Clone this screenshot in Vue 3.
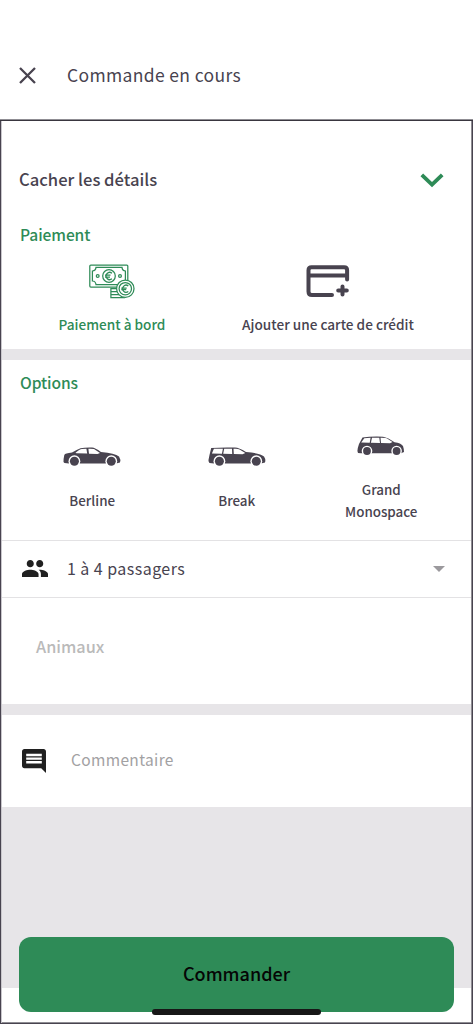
<template>
  <div class="screen">
    <header class="header">
      <button class="icon-btn" aria-label="Fermer">
        <svg width="17" height="17" viewBox="0 0 17 17">
          <path d="M1 1 16 16M16 1 1 16" fill="none" stroke="currentColor" stroke-width="2.3" />
        </svg>
      </button>
      <h1 class="title"><span>Commande en cours</span></h1>
    </header>

    <main class="panel">
      <section class="payment">
        <div class="details" @click="open = !open">
          <span class="details-label">Cacher les détails</span>
          <svg class="chevron" width="24" height="15" viewBox="0 0 24 15">
            <path d="M1.8 1.8 12 11.6 22.2 1.8" fill="none" stroke="currentColor" stroke-width="3.8" />
          </svg>
        </div>
        <h2 class="section-title">Paiement</h2>
        <div class="methods">
          <div class="method active">
            <svg width="46" height="35" viewBox="0 0 46 35" fill="none" stroke="currentColor" stroke-width="1.25">
              <rect x="0.8" y="1" width="38" height="22" rx="1" />
              <path d="M7 3.4H33Q33.3 6.8 36.4 7V17Q33.3 17.2 33 20.6H7Q6.7 17.2 3.4 17V7Q6.7 6.8 7 3.4Z" />
              <circle cx="20" cy="12" r="6.3" />
              <circle cx="8.7" cy="12" r="1.4" />
              <circle cx="31" cy="12" r="1.4" />
              <path d="M23 9.2A3.6 3.6 0 1 0 23 14.8M16 11.2H21.5M16 13H21" />
              <path d="M30 24.5H21.9V33.5H36M21.9 27.5H29M21.9 30.5H30" />
              <circle cx="36.3" cy="24.7" r="8.7" fill="#fff" />
              <circle cx="36.3" cy="24.7" r="6.2" />
              <path d="M39.3 22A3.5 3.5 0 1 0 39.3 27.4M32.3 24H37.7M32.3 25.6H37.2" />
            </svg>
            <span>Paiement à bord</span>
          </div>
          <div class="method">
            <svg width="44" height="35" viewBox="0 0 44 35" fill="none" stroke="currentColor" stroke-width="4" stroke-linecap="round" stroke-linejoin="round">
              <path d="M26 31H6Q2.5 31 2.5 27.5V6.2Q2.5 3.2 5.5 3.2H38.1Q41.1 3.2 41.1 6.2V15.4M2.5 11.6H41.1" />
              <path d="M36.5 22.4V30.6M32.2 26.5H40.800" />
            </svg>
            <span>Ajouter une carte de crédit</span>
          </div>
        </div>
      </section>

      <div class="band"></div>

      <section class="options">
        <h2 class="section-title options-title">Options</h2>
        <div class="cars">
          <div v-for="car in cars" :key="car.id" class="car" :class="car.id">
            <svg :width="car.width" height="20" :viewBox="`0 0 ${car.width} 20`">
              <path :d="car.body" fill="currentColor" />
              <path :d="car.windows" fill="#fff" />
              <g v-for="x in car.wheels" :key="x">
                <circle :cx="x" :cy="car.wheelY" :r="car.wheelR + 1.4" fill="#fff" />
                <circle :cx="x" :cy="car.wheelY" :r="car.wheelR" fill="currentColor" />
              </g>
            </svg>
            <span class="car-label">{{ car.label }}</span>
          </div>
        </div>
      </section>

      <div class="passengers">
        <svg width="26" height="17" viewBox="1 5 22 14" preserveAspectRatio="none">
          <path fill="#202020" d="M16 11c1.66 0 2.99-1.34 2.99-3S17.66 5 16 5c-1.66 0-3 1.34-3 3s1.34 3 3 3zm-8 0c1.66 0 2.99-1.34 2.99-3S9.66 5 8 5C6.34 5 5 6.34 5 8s1.34 3 3 3zm0 2c-2.33 0-7 1.17-7 3.5V19h14v-2.5c0-2.33-4.67-3.5-7-3.5zm8 0c-.29 0-.62.02-.97.05 1.16.84 1.97 1.97 1.97 3.45V19h6v-2.5c0-2.33-4.67-3.5-7-3.5z" />
        </svg>
        <span class="passengers-label">1 à 4 passagers</span>
        <span class="caret"></span>
      </div>

      <div class="animals"><span>Animaux</span></div>

      <div class="band"></div>

      <div class="comment">
        <svg width="24" height="24" viewBox="2 2 20 20">
          <path fill="#202020" d="M21.99 4c0-1.1-.89-2-1.99-2H4c-1.1 0-2 .9-2 2v12c0 1.1.9 2 2 2h14l4 4-.01-18z" />
          <path stroke="#fff" stroke-width="2" d="M5.5 7H18.5M5.5 10H18.5M5.5 13H18.5" />
        </svg>
        <span class="comment-label">Commentaire</span>
      </div>

      <footer class="footer">
        <button class="submit"><span>Commander</span></button>
        <div class="home-bar"></div>
      </footer>
    </main>
  </div>
</template>

<script setup>
import { ref } from 'vue'

const open = ref(true)

const cars = [
  {
    id: 'berline',
    label: 'Berline',
    width: 58,
    wheels: [11.4, 48.3],
    wheelY: 14.2,
    wheelR: 4.5,
    body: 'M1.5 16Q0 15 .6 12L1.3 8Q2 6.2 9 5.6Q14 2.6 17.5 1.3Q22 .4 29 .6Q32 .8 38 5Q52 6 56 9.5Q58 12.5 57 15.5L53 16.6H6Z',
    windows: 'M12.5 5.7Q16.5 2.2 19 2Q21 1.7 23.4 1.7L24.2 6.6L13.5 6.2ZM25.4 1.7Q30 1.6 31 2.1L37 6L34.5 7L26 6.7Z',
  },
  {
    id: 'break',
    label: 'Break',
    width: 58,
    wheels: [11.4, 48.3],
    wheelY: 14.2,
    wheelR: 4.5,
    body: 'M1.5 16Q0 14.5 .7 12L1.5 8L3.2 .9Q16 .2 27 .6Q31 .8 38 5Q52 6 56 9.5Q58 12.5 57 15.5L53 16.6H6Z',
    windows: 'M3.9 6.4L5.9 1.8H14.9L13.9 6.7ZM16.2 1.8H24L24.2 7L15.2 6.8ZM25.5 1.8Q30 1.5 31.5 2.4L37.3 6L34.5 7.2L25.8 7Z',
  },
  {
    id: 'monospace',
    label: 'Grand Monospace',
    width: 48,
    wheels: [10, 39.6],
    wheelY: 15,
    wheelR: 3.9,
    body: 'M1 17Q0 15 .8 12L2 8L5.5 1.6Q14 .2 26 .7Q31 1.5 37.5 6.2Q44 7 46 10Q47 13 47 16L44 17.2H4Z',
    windows: 'M4.2 6.5L7.3 2.2L13.6 1.8L12.7 6.7ZM15 1.7L22.3 1.7L23 6.9L13.9 6.8ZM23.5 1.7Q29 1.6 30.5 2.8L35.5 6L33 7.2L24 7Z',
  },
]
</script>

<style>
body {
  margin: 0;
  background: #fff;
}
</style>

<style scoped>
.screen {
  display: flex;
  flex-direction: column;
  height: 1024px;
  box-sizing: border-box;
  overflow: hidden;
  color: #48434f;
  font-family: "Noto Sans CJK SC", "Noto Sans", sans-serif;
  font-weight: 500;
}
h1,
h2 {
  margin: 0;
}
button {
  border: 0;
  font-family: inherit;
  padding: 0;
}
svg {
  display: block;
  flex: none;
}
span {
  white-space: nowrap;
}
.header {
  height: 121px;
  box-sizing: border-box;
  display: flex;
  align-items: flex-start;
  padding: 59px 0 0 19px;
  border-bottom: 1px solid #39363f;
  box-shadow: inset 0 -1px #8f8d93;
}
.icon-btn {
  background: none;
  color: inherit;
  height: 33px;
}
.title {
  margin-left: 31px;
  font-size: 17.5px;
  line-height: 31px;
  font-weight: 400;
  letter-spacing: 0.35px;
}
.panel {
  flex: 1;
  display: flex;
  flex-direction: column;
  box-sizing: border-box;
  border: solid #48434f;
  border-width: 0 1px 1px;
  box-shadow: inset 1px 0 #c9c7cc, inset -1px -1px #8f8d93;
  padding: 0 1px 1px;
}
.payment {
  height: 228px;
}
.details {
  display: flex;
  align-items: center;
  justify-content: space-between;
  height: 30px;
  padding: 43px 27px 0 17px;
}
.details-label {
  font-size: 16.6px;
}
.chevron {
  margin-top: 2px;
  color: #2e8b57;
}
.section-title {
  margin: 25px 0 0 18px;
  color: #2e8b57;
  font-size: 15.6px;
  line-height: 30px;
  font-weight: 500;
  letter-spacing: -0.1px;
}
.methods {
  display: flex;
  padding: 15px 36px 0 3px;
}
.method {
  width: 215px;
  display: flex;
  flex-direction: column;
  align-items: center;
  gap: 13px;
  line-height: 24px;
  font-size: 13.6px;
}
.method + .method {
  padding-left: 2px;
}
.active {
  color: #2e8b57;
}
.band {
  height: 11px;
  background: #e7e5e8;
}
.options {
  height: 180px;
}
.options-title {
  margin-top: 0;
  padding-top: 7px;
}
.cars {
  display: grid;
  grid-template-columns: repeat(3, 144.5px);
  padding: 50px 0 0 18px;
}
.car {
  display: flex;
  flex-direction: column;
  align-items: center;
  gap: 22px;
}
.monospace {
  margin-top: -11px;
}
.car-label {
  max-width: 90px;
  white-space: normal;
  text-align: center;
  font-size: 13.4px;
  line-height: 22px;
}
.passengers {
  display: flex;
  align-items: center;
  box-sizing: border-box;
  height: 58px;
  padding: 0 26px 1px 20px;
  border: 1px solid #e3e2e4;
  border-width: 1px 0;
}
.passengers-label {
  margin-left: 19px;
  padding-bottom: 2px;
  font-size: 16px;
  font-weight: 400;
  letter-spacing: 0.45px;
}
.caret {
  margin-left: auto;
  border: solid transparent;
  border-width: 6px 6px 0;
  border-top-color: #9b999d;
}
.animals {
  height: 106px;
  box-sizing: border-box;
  padding: 33px 0 0 34px;
  color: #bababa;
  font-size: 16.3px;
  line-height: 30px;
}
.comment {
  display: flex;
  align-items: center;
  height: 92px;
  padding-left: 20px;
}
.comment-label {
  margin-left: 25px;
  padding-bottom: 5px;
  color: #a2a1a3;
  font-size: 15.5px;
  font-weight: 400;
  letter-spacing: 0.35px;
}
.footer {
  position: relative;
  flex: 1;
  padding: 130px 17px 0;
  background: linear-gradient(#e7e5e8 181px, #fff 181px);
}
.submit {
  display: block;
  width: 100%;
  height: 75px;
  padding-bottom: 3px;
  border-radius: 12px;
  background: #2e8b57;
  color: #050505;
  font-size: 18px;
  font-weight: 500;
}
.home-bar {
  position: absolute;
  left: 150px;
  top: 202px;
  width: 169px;
  height: 6px;
  border-radius: 3px;
  background: #171717;
}
</style>
